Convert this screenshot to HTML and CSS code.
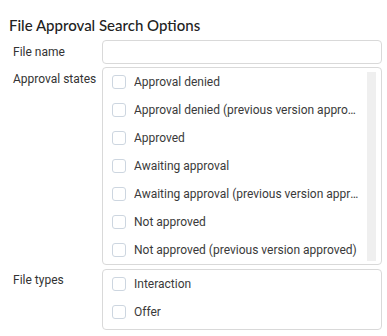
FILE: index.html
```html
<!DOCTYPE html>
<html>
<head>
    <title>File Approval Search Options</title>
    <link rel="stylesheet" href="styles.css">
</head>
<body>
    <h1>File Approval Search Options</h1>
    <div class="search-form">
        <label class="field-label">File name</label>
        <input class="text-input" type="text" value="">

        <label class="field-label">Approval states</label>
        <div class="check-box scroll">
            <div class="check-list">
                <label class="check-item"><input type="checkbox"><span>Approval denied</span></label>
                <label class="check-item"><input type="checkbox"><span>Approval denied (previous version approved)</span></label>
                <label class="check-item"><input type="checkbox"><span>Approved</span></label>
                <label class="check-item"><input type="checkbox"><span>Awaiting approval</span></label>
                <label class="check-item"><input type="checkbox"><span>Awaiting approval (previous version approved)</span></label>
                <label class="check-item"><input type="checkbox"><span>Not approved</span></label>
                <label class="check-item"><input type="checkbox"><span>Not approved (previous version approved)</span></label>
            </div>
            <div class="scroll-track"></div>
        </div>

        <label class="field-label">File types</label>
        <div class="check-box types">
            <div class="check-list">
                <label class="check-item"><input type="checkbox"><span>Interaction</span></label>
                <label class="check-item"><input type="checkbox"><span>Offer</span></label>
            </div>
        </div>
    </div>
</body>
</html>
```

FILE: styles.css
```css
body {
    font-family: Roboto, "Liberation Sans", sans-serif;
    margin: 0;
    padding: 11px 5px 0 9px;
    color: #333;
    background: #fff;
}

h1 {
    font-family: Lato, "Open Sans", sans-serif;
    font-size: 15px;
    font-weight: 500;
    color: #222;
    margin: 5px 0 6px 0;
    line-height: 18px;
}

.search-form {
    display: grid;
    grid-template-columns: 93px 280px;
    row-gap: 3px;
}

.field-label {
    font-size: 12px;
    padding: 4px 0 0 4px;
    line-height: 16px;
    white-space: nowrap;
}

.text-input {
    height: 24px;
    box-sizing: border-box;
    border: 1px solid #d9d9d9;
    border-radius: 4px;
    margin: 0;
    padding: 0 8px;
    font: inherit;
}

.check-box {
    display: flex;
    border: 1px solid #d9d9d9;
    border-radius: 4px;
}

.types {
    margin-top: 1px;
    padding-bottom: 3px;
}

.check-list {
    flex: 1;
    min-width: 0;
    padding-right: 3px;
}

.check-item {
    display: flex;
    align-items: center;
    height: 28px;
    padding-left: 9px;
    font-size: 12px;
    color: #3a3a3a;
}

.check-item span {
    white-space: nowrap;
    overflow: hidden;
    text-overflow: ellipsis;
}

.check-item input {
    appearance: none;
    width: 14px;
    height: 14px;
    margin: 0 8px 0 0;
    border: 1px solid #cdd6e0;
    border-radius: 3px;
    flex: none;
    background: #fff;
}

.scroll-track {
    width: 9px;
    flex: none;
    margin: 4px 5px 3px 3px;
    background: #efefef;
}
```
